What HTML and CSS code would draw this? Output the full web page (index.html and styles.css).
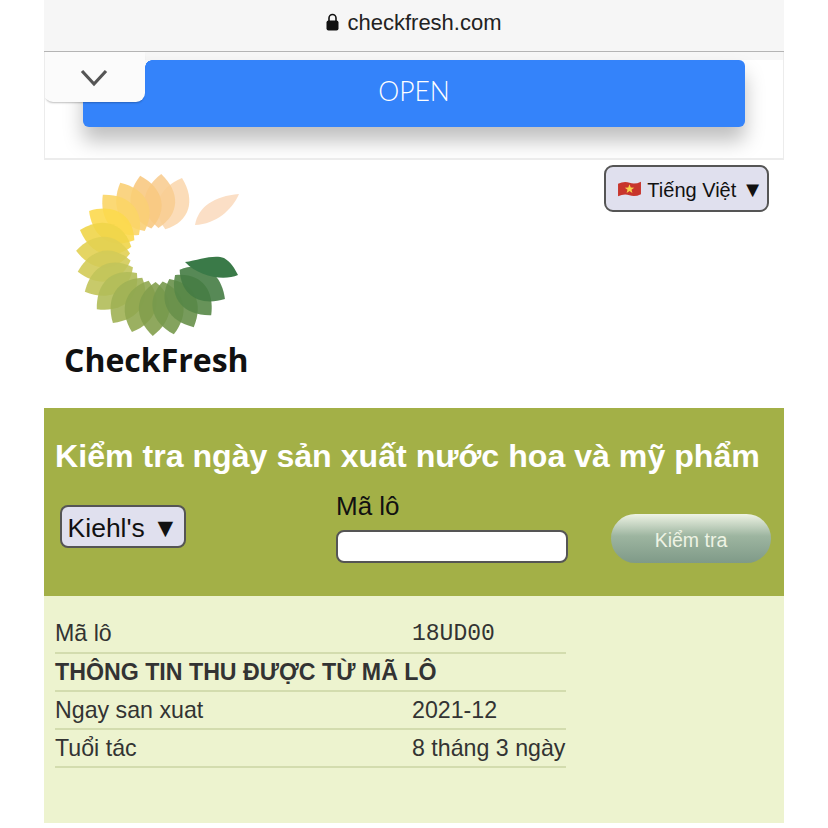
FILE: index.html
```html
<!DOCTYPE html>
<html lang="vi">
<head>
    <meta charset="UTF-8">
    <meta name="viewport" content="width=device-width, initial-scale=1.0">
    <title>CheckFresh</title>
    <link rel="stylesheet" href="styles.css">
</head>
<body>
    <div class="container">
        <div class="url-bar">
            <svg class="lock" width="13" height="18" viewBox="0 0 13 18">
                <path d="M3 8V5a3.5 3.5 0 0 1 7 0v3" fill="none" stroke="#111" stroke-width="1.6"/>
                <rect x="0.5" y="7.5" width="12" height="10" rx="2" fill="#111"/>
            </svg>
            <span>checkfresh.com</span>
        </div>

        <div class="ad">
            <div class="ad-tab">
                <svg width="28" height="18" viewBox="0 0 28 18">
                    <path d="M2 2l12 13L26 2" fill="none" stroke="#555" stroke-width="3.2"/>
                </svg>
            </div>
            <div class="ad-button">OPEN</div>
        </div>

        <div class="header">
            <div class="logo">
                <svg class="logo-mark" width="180" height="170" viewBox="0 0 180 170">
                    <defs>
                        <path id="petal" d="M0-27C-21-42-20-64 0-81C20-64 21-42 0-27Z"/>
                    </defs>
                    <g transform="translate(93 83)" fill-opacity="0.9">
                        <use href="#petal" fill="#fbd8b0" transform="rotate(18)"/>
                        <use href="#petal" fill="#f8cd92" transform="rotate(3)"/>
                        <use href="#petal" fill="#f8c982" transform="rotate(-12)"/>
                        <use href="#petal" fill="#f9cf76" transform="rotate(-27)"/>
                        <use href="#petal" fill="#fbd566" transform="rotate(-42)"/>
                        <use href="#petal" fill="#fcd94e" transform="rotate(-57)"/>
                        <use href="#petal" fill="#f0d549" transform="rotate(-72)"/>
                        <use href="#petal" fill="#e2d052" transform="rotate(-87)"/>
                        <use href="#petal" fill="#d3cb58" transform="rotate(-102)"/>
                        <use href="#petal" fill="#c2c45a" transform="rotate(-117)"/>
                        <use href="#petal" fill="#b1bc59" transform="rotate(-132)"/>
                        <use href="#petal" fill="#a0b154" transform="rotate(-147)"/>
                        <use href="#petal" fill="#90a750" transform="rotate(-162)"/>
                        <use href="#petal" fill="#839f4d" transform="rotate(-177)"/>
                        <use href="#petal" fill="#77994c" transform="rotate(-192)"/>
                        <use href="#petal" fill="#68904a" transform="rotate(-207)"/>
                        <use href="#petal" fill="#578747" transform="rotate(-222)"/>
                        <use href="#petal" fill="#457c44" transform="rotate(-237)"/>
                    </g>
                    <path d="M121 90C135 88 150 82 160 86C167 90 171 97 174 103C160 109 135 105 121 90Z" fill="#3a7a48"/>
                    <path d="M131 53C134 35 150 24 175 22C168 38 152 52 131 53Z" fill="#fbdfc6"/>
                </svg>
                <div class="logo-name">CheckFresh</div>
            </div>
            <button class="lang-select" type="button">
                <svg class="flag" width="25" height="18" viewBox="0 0 24 16">
                    <path d="M1 3Q7 0 12 2T23 1V13Q17 16 12 14T1 15Z" fill="#c8352c"/>
                    <path d="M12 3.5l1.2 3.1 3.3.1-2.6 2 .9 3.2-2.8-1.9-2.8 1.9.9-3.2-2.6-2 3.3-.1Z" fill="#f7d24a"/>
                </svg>
                <span>Tiếng Việt <span class="caret">▼</span></span>
            </button>
        </div>

        <div class="check-panel">
            <h1>Kiểm tra ngày sản xuất nước hoa và mỹ phẩm</h1>
            <div class="check-form">
                <button class="brand-select" type="button">Kiehl's ▼</button>
                <div class="code-field">
                    <label for="code">Mã lô</label>
                    <input id="code" type="text">
                </div>
                <button class="check-button" type="button">Kiểm tra</button>
            </div>
        </div>

        <div class="result-panel">
            <table class="result-table">
                <tr>
                    <td>Mã lô</td>
                    <td class="mono">18UD00</td>
                </tr>
                <tr>
                    <th colspan="2">THÔNG TIN THU ĐƯỢC TỪ MÃ LÔ</th>
                </tr>
                <tr>
                    <td>Ngay san xuat</td>
                    <td>2021-12</td>
                </tr>
                <tr>
                    <td>Tuổi tác</td>
                    <td>8 tháng 3 ngày</td>
                </tr>
            </table>
        </div>
    </div>
</body>
</html>
```

FILE: styles.css
```css
body {
    margin: 0;
    padding: 0;
    background-color: #fff;
    font-family: 'Liberation Sans', Arial, sans-serif;
    color: #333;
}

.container {
    margin: 0 44px;
    width: 740px;
}

.url-bar {
    height: 52px;
    display: flex;
    align-items: center;
    justify-content: center;
    gap: 8px;
    padding-bottom: 6px;
    box-sizing: border-box;
    background-color: #f6f6f6;
    border-bottom: 1px solid #b4b4b4;
    font-size: 22px;
    color: #222;
}

.lock {
    margin-top: -1px;
}

/* Ad banner */
.ad {
    position: relative;
    height: 108px;
    box-sizing: border-box;
    padding: 8px 38px 0 38px;
    background: linear-gradient(#f7f7f7 8px, #fff 8px);
    border: solid #ececec;
    border-width: 0 1px 2px 1px;
    overflow: hidden;
}

.ad-tab {
    position: absolute;
    left: -1px;
    top: 0;
    width: 101px;
    height: 50px;
    display: flex;
    align-items: flex-start;
    justify-content: center;
    padding-top: 17px;
    box-sizing: border-box;
    background-color: #fbfbfb;
    border-radius: 0 0 9px 9px;
    box-shadow: 0 2px 2px -1px rgba(0, 0, 0, 0.25);
    z-index: 1;
}

.ad-tab::after {
    content: '';
    position: absolute;
    left: 100%;
    top: 8px;
    width: 7px;
    height: 7px;
    background: radial-gradient(circle at 100% 100%, transparent 6.5px, #f7f7f7 7px);
}

.ad-tab svg {
    margin-right: 1px;
}

.ad-button {
    height: 67px;
    display: flex;
    align-items: center;
    justify-content: center;
    padding-bottom: 6px;
    box-sizing: border-box;
    background-color: #3483fa;
    border-radius: 0 6px 6px 6px;
    box-shadow: 0 14px 20px rgba(0, 0, 0, 0.25);
    font-family: 'Lato', sans-serif;
    font-weight: 300;
    font-size: 26.5px;
    color: #fff;
}

/* Logo + language */
.header {
    height: 248px;
    display: flex;
    justify-content: space-between;
    align-items: flex-start;
}

.logo {
    padding: 12px 0 0 20px;
}

.logo-mark {
    display: block;
}

.logo-name {
    font-family: 'Open Sans', sans-serif;
    font-weight: 700;
    font-size: 32px;
    line-height: 36px;
    color: #111;
}

.lang-select {
    margin: 5px 15px 0 0;
    width: 165px;
    height: 47px;
    display: flex;
    align-items: center;
    justify-content: center;
    gap: 5px;
    padding: 3px 0 0 8px;
    background-color: #e0e0ee;
    border: 2px solid #555;
    border-radius: 9px;
    font-family: inherit;
    font-size: 20px;
    color: #111;
}

.flag {
    margin-top: -3px;
}

.caret {
    font-size: 22px;
    line-height: 20px;
}

/* Green form */
.check-panel {
    height: 188px;
    box-sizing: border-box;
    padding: 29px 11px 0 11px;
    background-color: #a3b047;
}

.check-panel h1 {
    margin: 0;
    font-size: 32.14px;
    line-height: 38px;
    font-weight: 700;
    color: #fff;
    white-space: nowrap;
}

.check-form {
    display: flex;
    align-items: flex-start;
    margin-top: 17px;
}

.brand-select {
    margin: 13px 0 0 5px;
    width: 126px;
    height: 43px;
    padding: 3px 0 0 0;
    background-color: #e0e0ee;
    border: 2px solid #555;
    border-radius: 8px;
    font-family: inherit;
    font-size: 26.5px;
    color: #111;
}

.code-field {
    display: flex;
    flex-direction: column;
    margin-left: 150px;
}

.code-field label {
    font-size: 26px;
    line-height: 29px;
    margin-bottom: 9px;
    color: #111;
}

.code-field input {
    width: 232px;
    height: 33px;
    box-sizing: border-box;
    background-color: #fff;
    border: 2px solid #555;
    border-radius: 8px;
}

.check-button {
    margin: 22px 0 0 43px;
    width: 160px;
    height: 49px;
    padding: 3px 0 0 0;
    background: linear-gradient(#eef3e4, #9db5a0 45%, #7f9a88);
    border: none;
    border-radius: 25px;
    font-family: inherit;
    font-size: 19.5px;
    color: #eef3e4;
}

/* Result table */
.result-panel {
    height: 227px;
    box-sizing: border-box;
    padding: 19px 11px 0 11px;
    background-color: #edf3cf;
}

.result-table {
    width: 511px;
    border-collapse: collapse;
    table-layout: fixed;
    font-size: 23.2px;
    color: #333;
}

.result-table td,
.result-table th {
    height: 38px;
    padding: 0;
    box-sizing: border-box;
    border-bottom: 2px solid #d3dcae;
    text-align: left;
    white-space: nowrap;
}

.result-table td:first-child {
    width: 357px;
}

.mono {
    font-family: 'Liberation Mono', monospace;
    font-size: 23px;
}
```
